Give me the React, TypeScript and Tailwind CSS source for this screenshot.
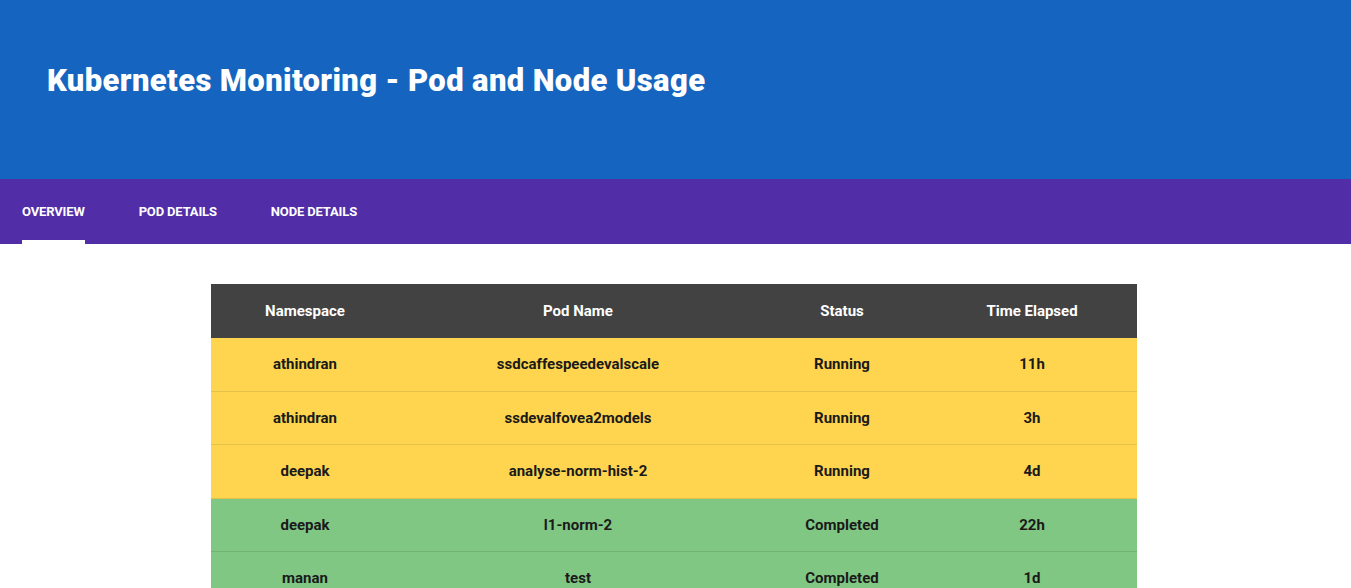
import React from "react";

const rows = [
  { ns: "athindran", pod: "ssdcaffespeedevalscale", status: "Running", time: "11h" },
  { ns: "athindran", pod: "ssdevalfovea2models", status: "Running", time: "3h" },
  { ns: "deepak", pod: "analyse-norm-hist-2", status: "Running", time: "4d" },
  { ns: "deepak", pod: "l1-norm-2", status: "Completed", time: "22h" },
  { ns: "manan", pod: "test", status: "Completed", time: "1d" },
  { ns: "manan", pod: "test-2", status: "Completed", time: "1d" },
];

export default function App() {
  return (
    <div
      className="min-h-screen bg-white"
      style={{ fontFamily: "Roboto, 'Liberation Sans', sans-serif" }}
    >
      <header className="h-[179px] bg-[#1565c0] pl-[47px] pt-[65px]">
        <h1 className="text-[31px] leading-none font-black text-white tracking-[0.38px]">
          Kubernetes Monitoring - Pod and Node Usage
        </h1>
      </header>
      <nav className="h-[65px] bg-[#512da8] flex pl-[22px] gap-[54px]">
        {["OVERVIEW", "POD DETAILS", "NODE DETAILS"].map((t, i) => (
          <div key={t} className="relative h-full flex items-center">
            <span className="text-[13px] font-bold text-white leading-none tracking-[-0.15px]">
              {t}
            </span>
            {i === 0 && (
              <span className="absolute left-0 right-0 bottom-0 h-[4px] bg-white" />
            )}
          </div>
        ))}
      </nav>
      <main className="pt-[40px]">
        <div className="w-[926px] ml-[211px]">
          <div className="grid grid-cols-[188px_358px_170px_210px] h-[54px] bg-[#424242] text-white text-[15px] font-bold items-center text-center">
            <div>Namespace</div>
            <div>Pod Name</div>
            <div>Status</div>
            <div>Time Elapsed</div>
          </div>
          {rows.map((r, i) => {
            const running = r.status === "Running";
            return (
              <div
                key={i}
                className={
                  "grid grid-cols-[188px_358px_170px_210px] h-[53.5px] items-center text-center text-[15px] font-bold text-[#1a1a1a] border-b " +
                  (running
                    ? "bg-[#ffd54f] border-[#e3c24c]"
                    : "bg-[#81c784] border-[#72b275]")
                }
              >
                <div>{r.ns}</div>
                <div>{r.pod}</div>
                <div>{r.status}</div>
                <div>{r.time}</div>
              </div>
            );
          })}
        </div>
      </main>
    </div>
  );
}
